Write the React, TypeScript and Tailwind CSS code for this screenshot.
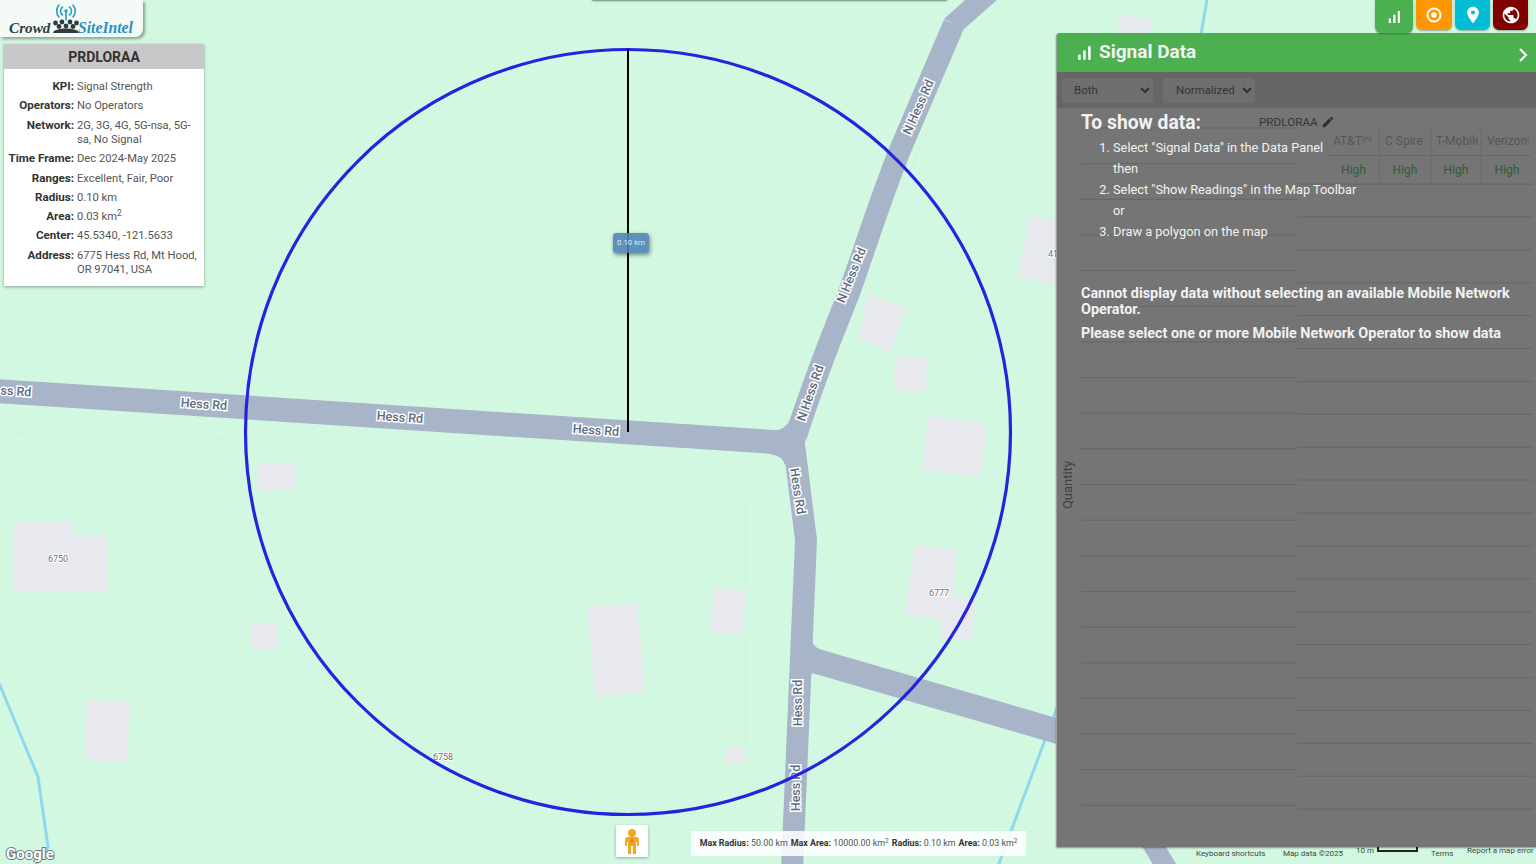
import React from "react";

const buildings = [
  "14,521 74,521 74,535 107,535 107,591 14,591",
  "251,624 278,624 278,650 251,650",
  "257,463 296,463 296,490 257,490",
  "587,607 637,603 645,692 595,697",
  "714,588 746,590 743,635 710,632",
  "87,700 130,702 127,762 85,760",
  "724,747 745,747 744,764 726,763",
  "868,295 906,308 890,352 858,338",
  "896,356 928,358 925,392 893,390",
  "928,416 987,423 980,477 922,470",
  "915,545 957,550 953,597 975,600 972,641 940,638 942,620 905,614",
  "1030,216 1060,222 1060,285 1017,277",
  "1120,14 1152,20 1150,34 1117,34",
];

const roadLabels = [
  { t: "ss Rd", x: 16, y: 391, r: 4 },
  { t: "Hess Rd", x: 204, y: 404, r: 4 },
  { t: "Hess Rd", x: 400, y: 417, r: 4 },
  { t: "Hess Rd", x: 596, y: 430, r: 4 },
  { t: "N Hess Rd", x: 918, y: 107, r: -66 },
  { t: "N Hess Rd", x: 851, y: 275, r: -68 },
  { t: "N Hess Rd", x: 810, y: 393, r: -71 },
  { t: "Hess Rd", x: 798, y: 491, r: 81 },
  { t: "Hess Rd", x: 797, y: 703, r: -90 },
  { t: "Hess Rd", x: 795, y: 788, r: -90 },
];

const houseNumbers = [
  { t: "6750", x: 58, y: 559 },
  { t: "6758", x: 443, y: 757 },
  { t: "6777", x: 939, y: 593 },
  { t: "41", x: 1053, y: 254 },
];

const faintLines = [
  "M147 500V864",
  "M770 100V400",
  "M745 500V590",
  "M0 432L240 440",
  "M860 130L780 320",
  "M1040 30C960 60 920 130 905 190",
  "M0 40H240",
  "M745 640V750",
];

const infoRows = [
  { k: "KPI:", v: "Signal Strength" },
  { k: "Operators:", v: "No Operators" },
  { k: "Network:", v: "2G, 3G, 4G, 5G-nsa, 5G-sa, No Signal" },
  { k: "Time Frame:", v: "Dec 2024-May 2025" },
  { k: "Ranges:", v: "Excellent, Fair, Poor" },
  { k: "Radius:", v: "0.10 km" },
  { k: "Area:", v: "0.03 km²", sup: true },
  { k: "Center:", v: "45.5340, -121.5633" },
  { k: "Address:", v: "6775 Hess Rd, Mt Hood, OR 97041, USA" },
];

const operators = ["AT&T", "C Spire", "T-Mobile", "Verizon"];

const leftLines = Array.from({ length: 20 }, (_, i) => 128 + i * 35.65);
const rightLines = Array.from({ length: 20 }, (_, i) => 184 + i * 32.9);

function MapLayer() {
  return (
    <svg className="absolute inset-0" width="1536" height="864" viewBox="0 0 1536 864" fill="none">
      {faintLines.map((d) => (
        <path key={d} d={d} stroke="#cbf4dd" strokeWidth="1" />
      ))}
      <g stroke="#8fd8ee" strokeWidth="3">
        <path d="M-1 683L38 777L48 847L35 866" />
        <path d="M1207 0L1201 34" />
        <path d="M1058 705L998 866" />
      </g>
      {buildings.map((p) => (
        <polygon key={p} points={p} fill="#e8e9ee" />
      ))}
      <g stroke="#a8b5c8" strokeLinejoin="round">
        <path d="M-5 391L790 443" strokeWidth="24" />
        <path d="M796 436C806 405 820 365 847 298C862 258 878 205 900 150L954 24" strokeWidth="22" />
        <path d="M793 436L806 540L792 870" strokeWidth="22" />
        <path d="M800 656L812 660L1060 732" strokeWidth="25" />
        <path d="M1150 840L1168 870" strokeWidth="20" />
      </g>
      <g fill="#a8b5c8">
        <polygon points="944,19 965,0 997,0 964,29" />
        <path d="M770 430Q784 432 790 420L806 440L785 465Q783 456 770 454Z" />
        <path d="M812 640Q813 648 825 651L815 672Q808 674 808 685L800 660Z" />
      </g>
      {roadLabels.map((l) => (
        <text
          key={`${l.x}-${l.y}`}
          x={l.x}
          y={l.y}
          transform={`rotate(${l.r} ${l.x} ${l.y})`}
          textAnchor="middle"
          dominantBaseline="central"
          fontFamily="Roboto, sans-serif"
          fontWeight="500"
          fontSize="12.5"
          fill="#5d6b80"
          stroke="#ffffff"
          strokeWidth="3"
          paintOrder="stroke"
        >
          {l.t}
        </text>
      ))}
      {houseNumbers.map((n) => (
        <text
          key={n.t}
          x={n.x}
          y={n.y}
          textAnchor="middle"
          dominantBaseline="central"
          fontFamily="Roboto, sans-serif"
          fontSize="9"
          fill="#66707f"
          stroke="#ffffff"
          strokeWidth="2"
          paintOrder="stroke"
        >
          {n.t}
        </text>
      ))}
      <circle cx="628" cy="432" r="382.5" stroke="#2424e0" strokeWidth="3.2" />
      <path d="M628 49V432" stroke="#000000" strokeWidth="2" />
      <text
        x="6"
        y="859"
        fontFamily="Roboto, sans-serif"
        fontWeight="700"
        fontSize="15"
        fill="#ffffff"
        stroke="#70797c"
        strokeWidth="2"
        paintOrder="stroke"
      >
        Google
      </text>
    </svg>
  );
}

function Logo() {
  return (
    <div className="absolute left-0 top-0 w-[143px] h-[37px] bg-[#f4fbf7] rounded-br-lg shadow-[2px_2px_3px_rgba(0,0,0,0.35)]">
      <svg className="absolute left-[52px] top-[2px]" width="28" height="32" viewBox="0 0 28 32" fill="none">
        <g stroke="#2b9cc8" strokeWidth="1.6" strokeLinecap="round">
          <path d="M10.5 5a5 5 0 000 8" />
          <path d="M17.5 5a5 5 0 010 8" />
          <path d="M7 3a9 9 0 000 12" />
          <path d="M21 3a9 9 0 010 12" />
          <path d="M14 9V18" />
        </g>
        <circle cx="14" cy="9" r="1.7" fill="#2b9cc8" />
        <g fill="#2e3c3c">
          <circle cx="3.5" cy="21" r="2.4" />
          <circle cx="10" cy="20" r="2.4" />
          <circle cx="18" cy="20" r="2.4" />
          <circle cx="24.5" cy="21" r="2.4" />
          <circle cx="7" cy="24.5" r="2.4" />
          <circle cx="14" cy="24" r="2.4" />
          <circle cx="21" cy="24.5" r="2.4" />
          <path d="M1 31C1 25 27 25 27 31Z" />
        </g>
      </svg>
      <span className="absolute left-[9px] top-[19px] font-['Liberation_Serif',serif] italic font-bold text-[15.2px] leading-[18px] text-[#2f4040]">
        Crowd
      </span>
      <span className="absolute left-[78px] top-[19px] font-['Liberation_Serif',serif] italic font-bold text-[15.7px] leading-[18px] text-[#2a8fc0]">
        SiteIntel
      </span>
    </div>
  );
}

function InfoCard() {
  return (
    <div className="absolute left-[4px] top-[44px] w-[200px] h-[242px] bg-white shadow-[0_1px_3px_rgba(0,0,0,0.35)]">
      <div className="h-[25px] pt-[1px] bg-[#c8c8c8] flex items-center justify-center text-[14px] font-bold text-[#333333]">
        PRDLORAA
      </div>
      <div className="pt-[10px] flex flex-col gap-[3.9px] text-[11.2px] leading-[14.4px]">
        {infoRows.map((r) => (
          <div key={r.k} className="flex items-baseline">
            <div className="w-[70px] shrink-0 text-right text-[11.6px] font-bold text-[#333333] whitespace-nowrap">{r.k}</div>
            <div className="pl-[3px] pr-[6px] text-[#555555]">
              {r.sup ? (
                <>
                  0.03 km<sup className="text-[8.5px] leading-[8px]">2</sup>
                </>
              ) : (
                r.v
              )}
            </div>
          </div>
        ))}
      </div>
    </div>
  );
}

function ToolButtons() {
  return (
    <div className="absolute right-[8px] top-0 flex items-start gap-[3px]">
      <div className="w-[38px] h-[33px] rounded-b-md bg-[#4caf50] flex items-center justify-center shadow-[0_1px_2px_rgba(0,0,0,0.3)]">
        <svg width="18" height="18" viewBox="0 0 24 24" fill="#ffffff">
          <path d="M17 4h3v16h-3zM5 14h3v6H5zm6-5h3v11h-3z" />
        </svg>
      </div>
      <div className="w-[36px] h-[30px] rounded-b-md bg-[#ff9800] flex items-center justify-center shadow-[0_1px_2px_rgba(0,0,0,0.3)]">
        <svg width="18" height="18" viewBox="0 0 18 18" fill="none">
          <circle cx="9" cy="9" r="6.5" stroke="#ffffff" strokeWidth="2" />
          <circle cx="9" cy="9" r="2.8" fill="#ffffff" />
        </svg>
      </div>
      <div className="w-[35px] h-[30px] rounded-b-md bg-[#00bcd4] flex items-center justify-center shadow-[0_1px_2px_rgba(0,0,0,0.3)]">
        <svg width="20" height="20" viewBox="0 0 24 24" fill="#ffffff">
          <path d="M12 2C8.13 2 5 5.13 5 9c0 5.25 7 13 7 13s7-7.75 7-13c0-3.87-3.13-7-7-7zm0 9.5a2.5 2.5 0 010-5 2.5 2.5 0 010 5z" />
        </svg>
      </div>
      <div className="w-[35px] h-[30px] rounded-b-md bg-[#800000] flex items-center justify-center shadow-[0_1px_2px_rgba(0,0,0,0.3)]">
        <svg width="20" height="20" viewBox="0 0 24 24" fill="#ffffff">
          <path d="M12 2C6.48 2 2 6.48 2 12s4.48 10 10 10 10-4.48 10-10S17.52 2 12 2zm-1 17.93c-3.95-.49-7-3.85-7-7.93 0-.62.08-1.21.21-1.79L9 15v1c0 1.1.9 2 2 2v1.93zm6.9-2.54c-.26-.81-1-1.39-1.9-1.39h-1v-3c0-.55-.45-1-1-1H8v-2h2c.55 0 1-.45 1-1V7h2c1.1 0 2-.9 2-2v-.41c2.93 1.19 5 4.06 5 7.41 0 2.08-.8 3.97-2.1 5.39z" />
        </svg>
      </div>
    </div>
  );
}

function SignalPanel() {
  return (
    <div className="absolute left-[1056px] top-[33px] w-[480px] h-[814px] flex flex-col rounded-tl border-l border-[#9aa0a0] bg-[#757575] shadow-[0_1px_2px_rgba(0,0,0,0.4)]">
      <div className="h-[39px] shrink-0 bg-[#4caf50] rounded-tl flex items-center pl-[17px] pr-[6px]">
        <svg width="20" height="20" viewBox="0 0 24 24" fill="#ffffff">
          <path d="M17 4h3v16h-3zM5 14h3v6H5zm6-5h3v11h-3z" />
        </svg>
        <span className="ml-[5px] text-[19px] font-bold text-[#f4f4f4]">Signal Data</span>
        <svg className="ml-auto mt-[4px]" width="14" height="16" viewBox="0 0 14 16" fill="none">
          <path d="M4 2l6 6-6 6" stroke="#ffffff" strokeWidth="2.2" />
        </svg>
      </div>
      <div className="h-[36px] shrink-0 bg-[#666666] flex items-center pl-[5px] gap-[10px]">
        <select defaultValue="Both" className="w-[91px] h-[25px] pl-[8px] rounded-sm bg-[#6f6f6f] text-[11.5px] text-[#333333]">
          <option>Both</option>
        </select>
        <select defaultValue="Normalized" className="w-[92px] h-[25px] pl-[9px] rounded-sm bg-[#6f6f6f] text-[11.5px] text-[#333333]">
          <option>Normalized</option>
        </select>
      </div>
      <div className="relative flex-1 pl-[24px] pt-[3px] text-[#f2f2f2]">
        <svg className="absolute left-0 top-0" width="480" height="739" viewBox="0 0 480 739" fill="none">
          {leftLines.map((y) => (
            <path key={y} d={`M24 ${y - 108}H240`} stroke="#666666" strokeWidth="1" />
          ))}
          {rightLines.map((y) => (
            <path key={y} d={`M240 ${y - 108}H476`} stroke="#676767" strokeWidth="1" />
          ))}
        </svg>

        <div className="absolute left-[10px] top-[370px] -rotate-90 origin-center w-[1px] flex justify-center text-[13px] leading-[14px] text-[#404040]">
          Quantity
        </div>

        <div className="absolute left-[202px] top-[7px] flex items-center gap-[3px] text-[11.7px] leading-[14px] text-[#363636]">
          PRDLORAA
          <svg width="14" height="14" viewBox="0 0 24 24" fill="#2e2e2e">
            <path d="M3 17.25V21h3.75L17.81 9.94l-3.75-3.75L3 17.25zM20.71 7.04c.39-.39.39-1.02 0-1.41l-2.34-2.34c-.39-.39-1.02-.39-1.41 0l-1.83 1.83 3.75 3.75 1.83-1.83z" />
          </svg>
        </div>

        <div className="absolute left-[271px] top-[20px] w-[204px] grid grid-cols-4 text-[12px]">
          {operators.map((o, i) => (
            <div key={o} className={`h-[28px] pb-[2px] flex items-center pl-[5px] pr-[3px] border-b border-[#696969] text-[#555555] ${i > 0 ? "border-l" : ""}`}>
              <span className="block w-full overflow-hidden whitespace-nowrap">
                {o}
                {(o === "AT&T" || o === "Verizon") && <sup className="text-[8px]">(n)</sup>}
              </span>
            </div>
          ))}
          {operators.map((o, i) => (
            <div
              key={o + "-high"}
              className={`h-[29px] flex items-center justify-center border-b border-[#696969] text-[#2f5f2f] ${i > 0 ? "border-l" : ""}`}
            >
              High
            </div>
          ))}
        </div>

        <div className="relative">
          <h2 className="text-[19.3px] leading-[24px] font-bold">To show data:</h2>
          <ol className="mt-[1.5px] pl-[32px] list-decimal text-[12.8px] leading-[21px]">
            <li>Select "Signal Data" in the Data Panel</li>
            <li className="list-none">then</li>
            <li value={2}>Select "Show Readings" in the Map Toolbar</li>
            <li className="list-none">or</li>
            <li value={3}>Draw a polygon on the map</li>
          </ol>
          <p className="mt-[44.5px] text-[14.4px] leading-[16px] font-bold pr-[20px]">
            Cannot display data without selecting an available Mobile Network Operator.
          </p>
          <p className="mt-[8px] text-[14.4px] leading-[16px] font-bold">
            Please select one or more Mobile Network Operator to show data
          </p>
        </div>
      </div>
    </div>
  );
}

function RadiusLabel() {
  return (
    <div className="absolute left-[613px] top-[233px] w-[36px] h-[20px] rounded-[3px] bg-[#4f86b5]/90 shadow-[1px_2px_4px_rgba(0,0,0,0.45)] flex items-center justify-center text-[7.8px] text-[#dfeaf3] whitespace-nowrap">
      0.10 km
    </div>
  );
}

function Pegman() {
  return (
    <div className="absolute left-[616px] top-[825px] w-[32px] h-[32px] bg-white shadow-[0_1px_3px_rgba(0,0,0,0.3)] flex items-center justify-center">
      <svg width="16" height="26" viewBox="0 0 16 26" fill="#f2a81d">
        <circle cx="8" cy="5" r="4" />
        <path d="M4 9h8c2 0 3 1.5 3 3.5V18h-2v-4l-1 0v12H9v-8H7v8H4V14l-1 0v4H1v-5.5C1 10.5 2 9 4 9z" />
        <path d="M8 10l1.5 3L8 16l-1.5-3z" fill="#d9702a" />
      </svg>
    </div>
  );
}

function MeasureBar() {
  return (
    <div className="absolute left-[691px] top-[831px] w-[335px] h-[25px] bg-white/85 flex items-center justify-center gap-[3px] text-[8.9px] text-[#555555] whitespace-nowrap">
      <span>
        <b className="font-bold text-[#333333]">Max Radius:</b> 50.00 km
      </span>
      <span>
        <b className="font-bold text-[#333333]">Max Area:</b> 10000.00 km<sup className="text-[6.5px]">2</sup>
      </span>
      <span>
        <b className="font-bold text-[#333333]">Radius:</b> 0.10 km
      </span>
      <span>
        <b className="font-bold text-[#333333]">Area:</b> 0.03 km<sup className="text-[6.5px]">2</sup>
      </span>
    </div>
  );
}

function MapFooter() {
  return (
    <>
      <div className="absolute left-[1196px] top-[848px] text-[8px] leading-[12px] text-[#444444]">Keyboard shortcuts</div>
      <div className="absolute left-[1283px] top-[848px] text-[8px] leading-[12px] text-[#444444]">Map data ©2025</div>
      <div className="absolute left-[1356px] top-[845px] flex items-start text-[8px] leading-[11px] text-[#444444]">
        10 m
        <span className="ml-[3px] mt-[2px] w-[41px] h-[5px] border-x-2 border-b-2 border-[#222222]" />
      </div>
      <div className="absolute left-[1431px] top-[848px] text-[8px] leading-[12px] text-[#444444]">Terms</div>
      <div className="absolute left-[1467px] top-[845px] text-[8px] leading-[11px] text-[#444444] whitespace-nowrap">Report a map error</div>
    </>
  );
}

export default function App() {
  return (
    <div className="relative w-[1536px] h-[864px] overflow-hidden bg-[#d2f8e2] font-[Roboto,sans-serif]">
      <MapLayer />
      <div className="absolute left-[592px] top-[-2px] w-[355px] h-[2px] bg-white shadow-[0_1px_2px_rgba(0,0,0,0.5)]" />
      <RadiusLabel />
      <Pegman />
      <MeasureBar />
      <MapFooter />
      <Logo />
      <InfoCard />
      <SignalPanel />
      <ToolButtons />
    </div>
  );
}
